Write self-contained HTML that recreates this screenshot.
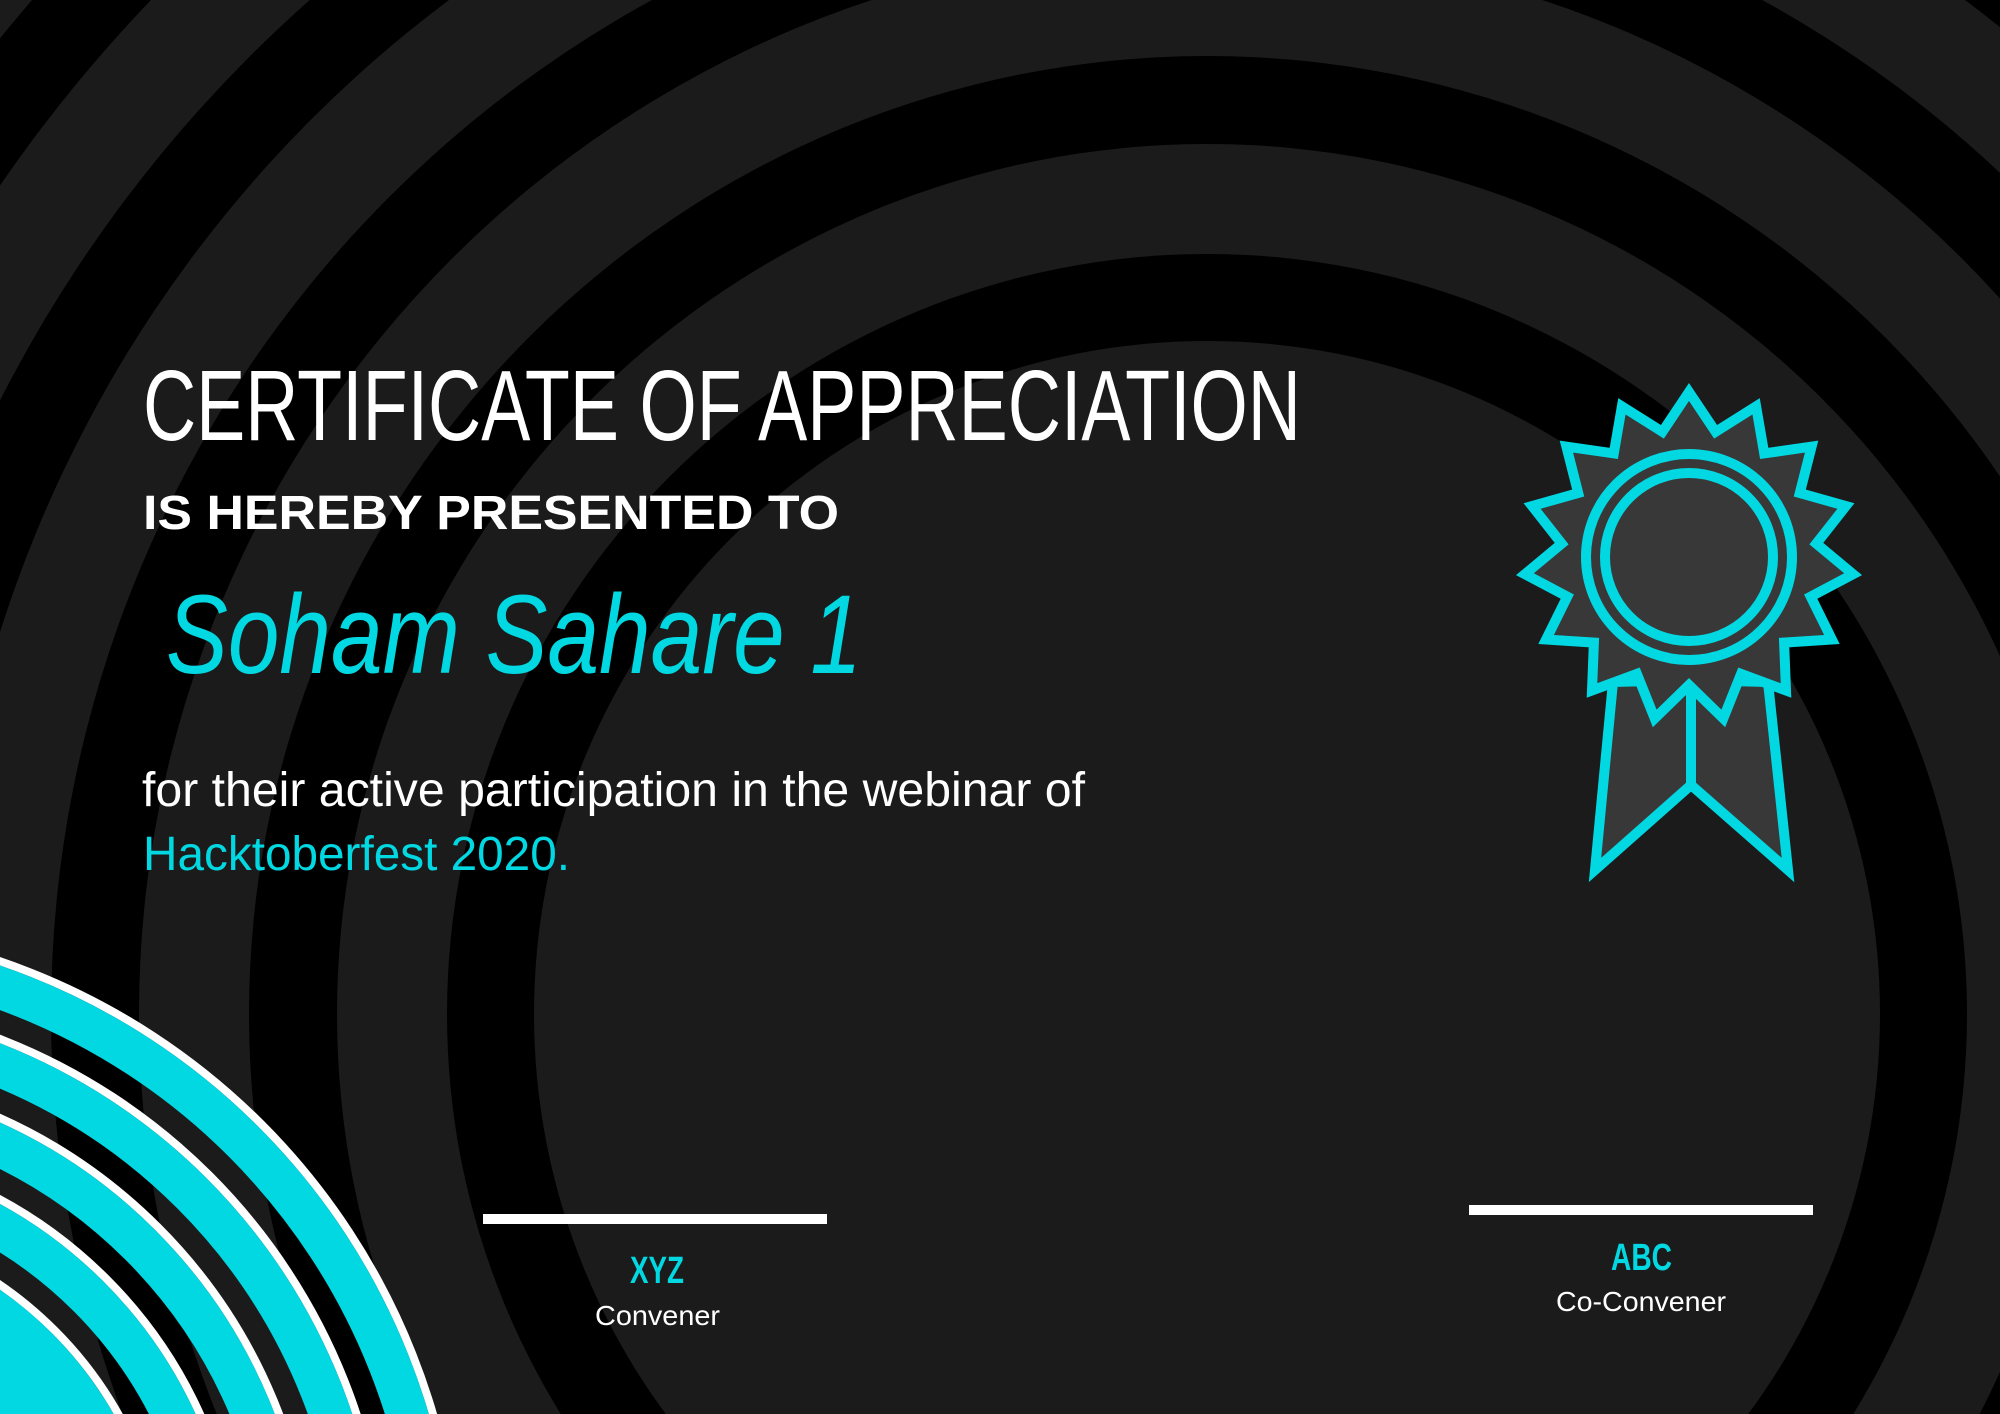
<!DOCTYPE html>
<html><head><meta charset="utf-8">
<style>
html,body{margin:0;padding:0;background:#1b1b1b;width:2000px;height:1414px;overflow:hidden;}
svg{display:block;}
</style></head>
<body>
<svg width="2000" height="1414" viewBox="0 0 2000 1414" xmlns="http://www.w3.org/2000/svg">
<rect width="2000" height="1414" fill="#1b1b1b"/>
<g>
<circle cx="1207" cy="1014" r="2300" fill="#000"/>
<circle cx="1207" cy="1014" r="2058" fill="#1b1b1b"/>
<circle cx="1207" cy="1014" r="1970" fill="#000"/>
<circle cx="1207" cy="1014" r="1860" fill="#1b1b1b"/>
<circle cx="1207" cy="1014" r="1750" fill="#000"/>
<circle cx="1207" cy="1014" r="1662" fill="#1b1b1b"/>
<circle cx="1207" cy="1014" r="1552" fill="#000"/>
<circle cx="1207" cy="1014" r="1464" fill="#1b1b1b"/>
<circle cx="1207" cy="1014" r="1354" fill="#000"/>
<circle cx="1207" cy="1014" r="1266" fill="#1b1b1b"/>
<circle cx="1207" cy="1014" r="1156" fill="#000"/>
<circle cx="1207" cy="1014" r="1068" fill="#1b1b1b"/>
<circle cx="1207" cy="1014" r="958" fill="#000"/>
<circle cx="1207" cy="1014" r="870" fill="#1b1b1b"/>
<circle cx="1207" cy="1014" r="760" fill="#000"/>
<circle cx="1207" cy="1014" r="673" fill="#1b1b1b"/>
</g>
<g fill="none">
<circle cx="-219" cy="1604" r="679" stroke="#fff" stroke-width="8"/>
<circle cx="-219" cy="1604" r="654" stroke="#02d8e2" stroke-width="42"/>
<circle cx="-219" cy="1604" r="606" stroke="#fff" stroke-width="8"/>
<circle cx="-219" cy="1604" r="581" stroke="#02d8e2" stroke-width="42"/>
<circle cx="-219" cy="1604" r="533" stroke="#fff" stroke-width="8"/>
<circle cx="-219" cy="1604" r="508" stroke="#02d8e2" stroke-width="42"/>
<circle cx="-219" cy="1604" r="460" stroke="#fff" stroke-width="8"/>
<circle cx="-219" cy="1604" r="435" stroke="#02d8e2" stroke-width="42"/>
<circle cx="-219" cy="1604" r="387" stroke="#fff" stroke-width="8"/>
<circle cx="-219" cy="1604" r="383" fill="#02d8e2"/>
</g>
<g stroke="#02d8e2" stroke-width="10" stroke-linejoin="miter" fill="#383838">
<polygon points="1613,682 1595,870 1691,785 1691,680"/>
<polygon points="1768,682 1788,870 1691,785 1691,680"/>
<polygon points="1689,392 1715.6,431.8 1756.1,406.3 1764.2,453.4 1811.6,446.6 1799.8,493.0 1845.9,506.0 1816.3,543.6 1853.1,574.2 1810.7,596.6 1831.9,639.5 1784.1,642.6 1786.0,690.5 1741.1,673.9 1723.3,718.4 1689,685 1654.7,718.4 1636.9,673.9 1592.0,690.5 1593.9,642.6 1546.1,639.5 1567.3,596.6 1524.9,574.2 1561.7,543.6 1532.1,506.0 1578.2,493.0 1566.4,446.6 1613.8,453.4 1621.9,406.3 1662.4,431.8"/>
<circle cx="1689" cy="557" r="103"/>
<circle cx="1689" cy="557" r="84"/>
</g>
<g font-family="'Liberation Sans', sans-serif">
<text x="143" y="440" font-size="100" fill="#fff" textLength="1158" lengthAdjust="spacingAndGlyphs">CERTIFICATE OF APPRECIATION</text>
<text x="143" y="529" font-size="48" font-weight="bold" fill="#fff" textLength="696" lengthAdjust="spacingAndGlyphs">IS HEREBY PRESENTED TO</text>
<text x="166" y="673" font-size="112" font-style="italic" fill="#02d8e2" textLength="696" lengthAdjust="spacingAndGlyphs">Soham Sahare 1</text>
<text x="142" y="806" font-size="48" fill="#fff" textLength="943" lengthAdjust="spacingAndGlyphs">for their active participation in the webinar of</text>
<text x="143" y="870" font-size="48" fill="#02d8e2" textLength="427" lengthAdjust="spacingAndGlyphs">Hacktoberfest 2020.</text>
<rect x="483" y="1214" width="344" height="10" fill="#fff"/>
<rect x="1469" y="1205" width="344" height="10" fill="#fff"/>
<text x="630" y="1283" font-size="38" font-weight="bold" fill="#02d8e2" textLength="54" lengthAdjust="spacingAndGlyphs">XYZ</text>
<text x="595" y="1325" font-size="28" fill="#fff" textLength="125" lengthAdjust="spacingAndGlyphs">Convener</text>
<text x="1611" y="1270" font-size="38" font-weight="bold" fill="#02d8e2" textLength="61" lengthAdjust="spacingAndGlyphs">ABC</text>
<text x="1556" y="1311" font-size="28" fill="#fff" textLength="170" lengthAdjust="spacingAndGlyphs">Co-Convener</text>
</g>
</svg>
</body></html>
